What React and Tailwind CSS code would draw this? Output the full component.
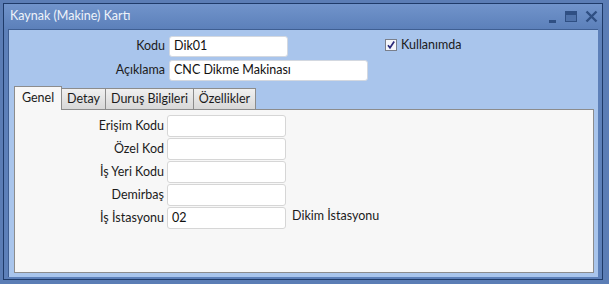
import React from 'react';

const font = { fontFamily: '"Lato", "Liberation Sans", sans-serif' };

const Field = ({ label, value = '', width = 'w-[119px]' }) => (
  <div className="flex h-[21px] items-center">
    <div className="w-[155px] pr-[4px] text-right text-[12.5px] text-[#1b1b1b]">{label}</div>
    <div className={`flex h-full ${width} items-center rounded-[3px] border border-[#d3d8e0] bg-white px-[4px] text-[12.5px] text-[#111]`}>
      {value}
    </div>
  </div>
);

const TabField = ({ label, value = '' }) => (
  <div className="flex h-[22px] items-center">
    <div className="w-[152px] pr-[3px] text-right text-[12.5px] text-[#1b1b1b]">{label}</div>
    <div className="flex h-full w-[119px] items-center rounded-[3px] border border-[#d6d6d6] bg-white px-[4px] text-[12.5px] text-[#111]">
      {value}
    </div>
  </div>
);

export default function App() {
  const tabs = [
    { label: 'Detay', w: 'w-[45px]' },
    { label: 'Duruş Bilgileri', w: 'w-[89px]' },
    { label: 'Özellikler', w: 'w-[63px]' },
  ];

  return (
    <div className="h-[284px] w-[609px] overflow-hidden bg-[#5b7db5] pl-[3px] pt-[3px]" style={font}>
      <div className="flex h-[277px] w-[600px] flex-col border border-[#1f3b69] bg-[#5d80b9]">
        {/* title bar */}
        <div className="flex h-[25px] shrink-0 items-center bg-gradient-to-b from-[#7194cb] to-[#5c80ba] pl-[6px] pr-[4px]">
          <span className="text-[12.5px] text-[#eef3fa]">Kaynak (Makine) Kartı</span>
          <div className="ml-auto flex items-center gap-[8px]">
            <svg width="8" height="14" viewBox="0 0 8 14"><rect x="0" y="10" width="7" height="3" fill="#2f4f83" /></svg>
            <svg width="12" height="12" viewBox="0 0 12 12"><rect x="0.5" y="0.5" width="11" height="10" fill="#4f72aa" stroke="#2f4f83" strokeWidth="1" /><rect x="1" y="1" width="10" height="3" fill="#2f4f83" /></svg>
            <svg width="13" height="13" viewBox="0 0 13 13"><path d="M1.5 1.5 L11.5 11.5 M11.5 1.5 L1.5 11.5" stroke="#2f4f83" strokeWidth="2.4" /></svg>
          </div>
        </div>

        {/* client area */}
        <div className="flex flex-1 px-[4px] pb-[2px]">
          <div className="flex flex-1 flex-col border-l border-t border-[#3f5f93] bg-[#a9c5ec] pl-[5px] pr-[4px] pb-[4px]">
            <div className="flex pt-[6px]">
              <div className="flex flex-col gap-[3px]">
                <Field label="Kodu" value="Dik01" />
                <Field label="Açıklama" value="CNC Dikme Makinası" width="w-[199px]" />
              </div>
              <label className="ml-[17px] flex h-[18px] items-start gap-[4px] pt-[2px] text-[12.5px] text-[#1b1b1b]">
                <svg width="12" height="12" viewBox="0 0 12 12" className="mt-[1px]">
                  <rect x="0.5" y="0.5" width="11" height="11" fill="#f4f6fa" stroke="#7a7f8a" />
                  <path d="M3 6.2 L5 8.8 L9.2 2.6" stroke="#2a2a7a" strokeWidth="1.7" fill="none" />
                </svg>
                <span className="-mt-[1px] leading-[16px]">Kullanımda</span>
              </label>
            </div>

            {/* tabs */}
            <div className="mt-[5px] flex h-[23px] items-end">
              <div className="relative z-10 -mb-[1px] flex h-[24px] w-[48px] items-center justify-center border border-b-0 border-[#8c8c8c] bg-[#f7f7f7] pb-[1px] text-[12.5px] text-[#1b1b1b]">
                Genel
              </div>
              {tabs.map((t) => (
                <div
                  key={t.label}
                  className={`-ml-[1px] flex h-[21px] ${t.w} items-center justify-center border border-b-0 border-[#8c8c8c] bg-gradient-to-b from-[#f0f0f0] to-[#d8d8d8] text-[12.5px] text-[#1b1b1b]`}
                >
                  {t.label}
                </div>
              ))}
            </div>
            <div className="flex flex-1 flex-col gap-[1px] border border-[#8c8c8c] bg-[#f7f7f7] pt-[5px]">
              <TabField label="Erişim Kodu" />
              <TabField label="Özel Kod" />
              <TabField label="İş Yeri Kodu" />
              <TabField label="Demirbaş" />
              <div className="flex items-start">
                <TabField label="İş İstasyonu" value="02" />
                <div className="ml-[6px] h-[15px] overflow-hidden text-[12.5px] leading-[18px] text-[#1b1b1b]">
                  Dikim İstasyonu
                </div>
              </div>
            </div>
          </div>
        </div>
      </div>
    </div>
  );
}
